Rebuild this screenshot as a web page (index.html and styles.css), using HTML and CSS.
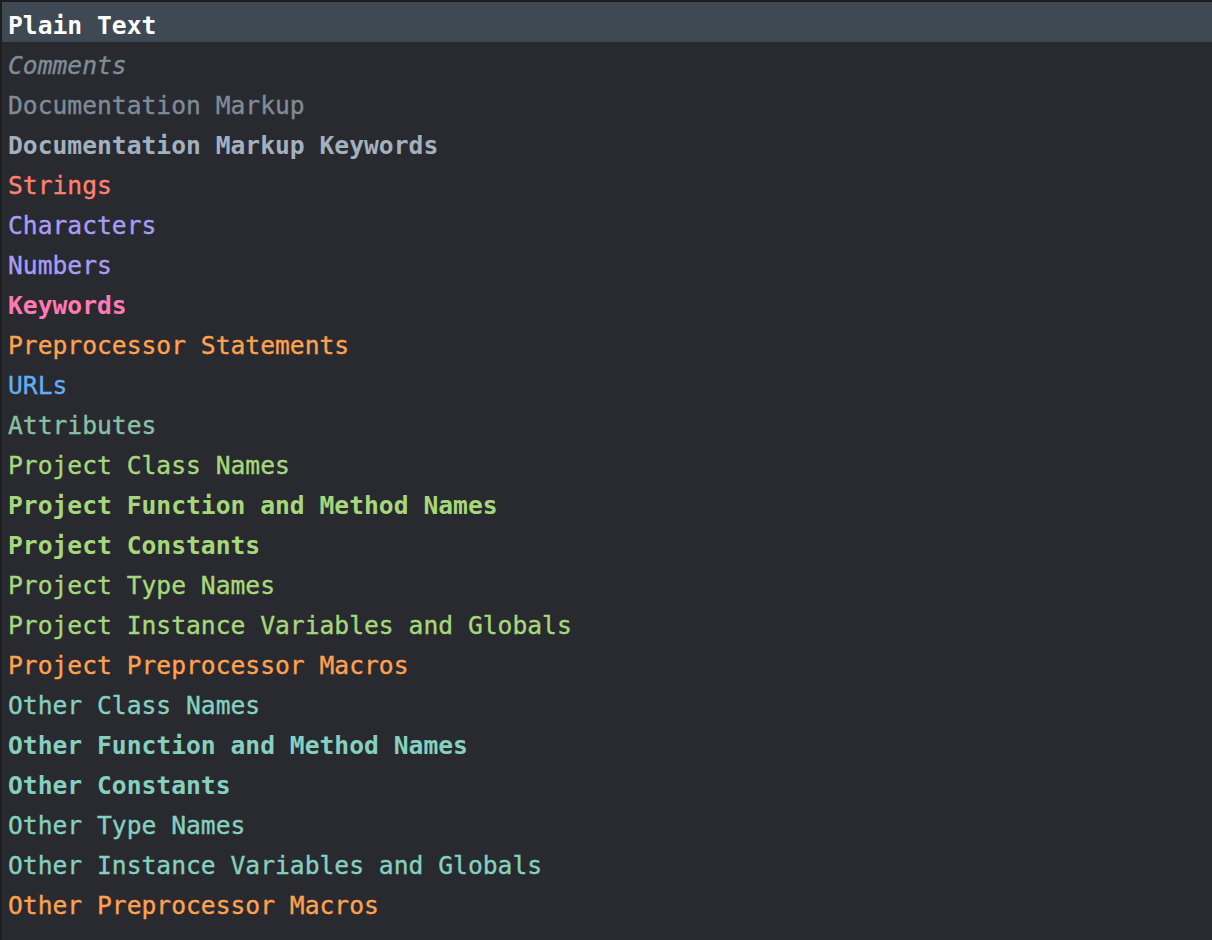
FILE: index.html
```html
<!DOCTYPE html>
<html lang="en">
<head>
<meta charset="utf-8">
<title>Font &amp; Colors</title>
<link rel="stylesheet" href="styles.css">
</head>
<body>
<div class="list">
  <div class="row selected plain">Plain Text</div>
  <div class="row comment">Comments</div>
  <div class="row doc">Documentation Markup</div>
  <div class="row doc-kw">Documentation Markup Keywords</div>
  <div class="row string">Strings</div>
  <div class="row number">Characters</div>
  <div class="row number">Numbers</div>
  <div class="row keyword">Keywords</div>
  <div class="row preproc">Preprocessor Statements</div>
  <div class="row url">URLs</div>
  <div class="row attr">Attributes</div>
  <div class="row project">Project Class Names</div>
  <div class="row project strong">Project Function and Method Names</div>
  <div class="row project strong">Project Constants</div>
  <div class="row project">Project Type Names</div>
  <div class="row project">Project Instance Variables and Globals</div>
  <div class="row preproc">Project Preprocessor Macros</div>
  <div class="row other">Other Class Names</div>
  <div class="row other strong">Other Function and Method Names</div>
  <div class="row other strong">Other Constants</div>
  <div class="row other">Other Type Names</div>
  <div class="row other">Other Instance Variables and Globals</div>
  <div class="row preproc">Other Preprocessor Macros</div>
</div>
</body>
</html>
```
FILE: styles.css
```css
html, body {
  margin: 0;
  padding: 0;
  height: 100%;
  background: #292a30;
}
body {
  box-sizing: border-box;
  border-top: 2px solid #1e1e20;
  border-left: 2px solid #1e1e20;
  font-family: "DejaVu Sans Mono", "Liberation Mono", monospace;
  font-size: 24.65px;
  -webkit-font-smoothing: antialiased;
}
.list {
  display: flex;
  flex-direction: column;
}
.row {
  box-sizing: border-box;
  height: 40px;
  padding-top: 8px;
  line-height: 32px;
  padding-left: 6px;
  white-space: pre;
  -webkit-text-stroke: 0.35px currentColor;
}
.selected {
  background: #3e4953;
}
.plain { color: #ffffff; font-weight: bold; -webkit-text-stroke: 0; }
.comment { color: #7f8c98; font-style: italic; }
.doc { color: #7f8c98; }
.doc-kw { color: #a3b1bf; font-weight: bold; -webkit-text-stroke: 0; }
.string { color: #ff8170; }
.number { color: #a79df6; }
.keyword { color: #ff7ab2; font-weight: bold; -webkit-text-stroke: 0; }
.preproc { color: #ffa14f; }
.url { color: #62aef5; }
.attr { color: #88c2a3; }
.project { color: #a6d87b; }
.other { color: #85d0bf; }
.strong { font-weight: bold; -webkit-text-stroke: 0; }
```
